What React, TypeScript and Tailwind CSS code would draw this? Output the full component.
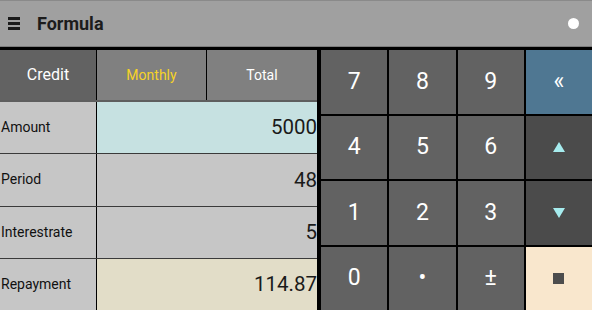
import React from 'react';

const rows = [
  { label: 'Amount', value: '5000', bg: 'bg-[#c6e1e1]' },
  { label: 'Period', value: '48', bg: 'bg-[#c6c6c6]' },
  { label: 'Interestrate', value: '5', bg: 'bg-[#c6c6c6]' },
  { label: 'Repayment', value: '114.87', bg: 'bg-[#e2ddc8]' },
];

function Key({ children, className = 'bg-[#626262] text-white' }: { children: React.ReactNode; className?: string }) {
  return (
    <button className={`flex items-center justify-center text-[23px] ${className}`}>
      {children}
    </button>
  );
}

export default function App() {
  return (
    <div className="w-[592px] h-[310px] overflow-hidden flex flex-col bg-black font-['Roboto',sans-serif]">
      {/* Header */}
      <div className="h-[47px] shrink-0 flex items-center bg-[#a0a0a0] border-t border-[#8a8a8a] border-b border-b-[#7c7c7c]">
        <div className="ml-[8px] flex flex-col gap-[2.5px] w-[12px]">
          <span className="h-[2.5px] bg-[#1a1a1a]"></span>
          <span className="h-[2.5px] bg-[#1a1a1a]"></span>
          <span className="h-[2.5px] bg-[#1a1a1a]"></span>
        </div>
        <h1 className="ml-[17px] text-[18px] font-bold text-[#1c1c1c]">Formula</h1>
        <span className="ml-auto mr-[13px] w-[11px] h-[11px] rounded-full bg-white"></span>
      </div>

      {/* Body */}
      <div className="flex-1 flex pt-[3px] gap-[4px]">
        {/* Left panel */}
        <div className="w-[317px] flex flex-col">
          <div className="h-[50px] flex gap-[1px] bg-black">
            <div className="w-[96px] bg-[#626262] flex items-center justify-center text-white text-[16px]">Credit</div>
            <div className="w-[109px] bg-[#808080] flex items-center justify-center text-[#f7d327] text-[14px]">Monthly</div>
            <div className="flex-1 bg-[#808080] flex items-center justify-center text-white text-[14px]">Total</div>
          </div>
          <div className="flex-1 flex flex-col border-t-2 border-[#5e5e5e]">
            {rows.map((r, i) => (
              <div key={r.label} className={`flex-1 flex ${i > 0 ? 'border-t border-[#3a3a3a]' : ''}`}>
                <div className="w-[96px] bg-[#c6c6c6] flex items-center pl-[1px] text-[14px] text-[#111]">{r.label}</div>
                <div className={`flex-1 ml-[1px] ${r.bg} flex items-center justify-end text-[20.5px] text-[#1a1a1a]`}>{r.value}</div>
              </div>
            ))}
          </div>
        </div>

        {/* Keypad */}
        <div className="flex-1 grid grid-cols-4 grid-rows-4 gap-[2px]">
          <Key>7</Key>
          <Key>8</Key>
          <Key>9</Key>
          <Key className="bg-[#4f7792] text-white text-[18px]">«</Key>
          <Key>4</Key>
          <Key>5</Key>
          <Key>6</Key>
          <Key className="bg-[#4b4b4b]">
            <svg width="12" height="10" viewBox="0 0 12 10"><path d="M6 0 L12 10 L0 10 Z" fill="#a6ecee" /></svg>
          </Key>
          <Key>1</Key>
          <Key>2</Key>
          <Key>3</Key>
          <Key className="bg-[#4b4b4b]">
            <svg width="12" height="10" viewBox="0 0 12 10"><path d="M0 0 L12 0 L6 10 Z" fill="#a6ecee" /></svg>
          </Key>
          <Key>0</Key>
          <Key className="bg-[#626262] text-white text-[16px]">•</Key>
          <Key className="bg-[#626262] text-white text-[16px]">±</Key>
          <Key className="bg-[#f9e7cd]">
            <span className="w-[11px] h-[11px] bg-[#4d4d4d]"></span>
          </Key>
        </div>
      </div>
    </div>
  );
}
